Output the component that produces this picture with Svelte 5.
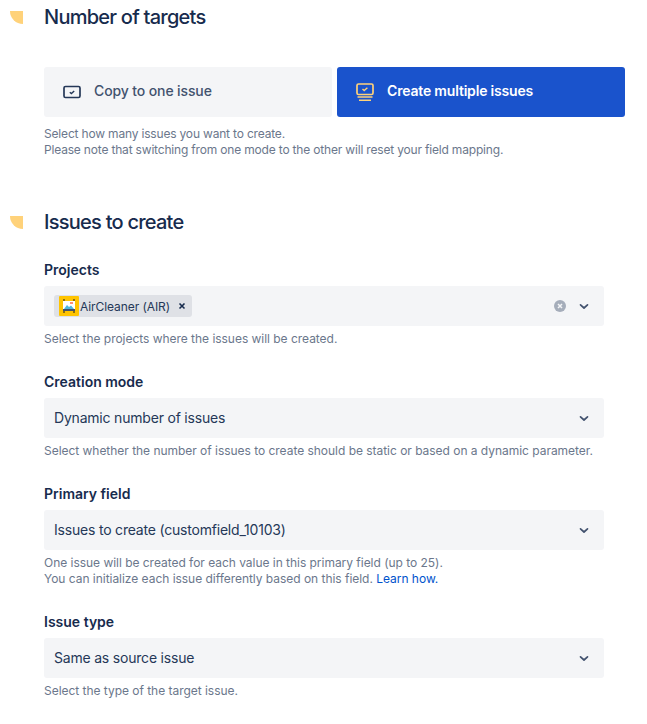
<script>
  const fields = [
    { label: 'Creation mode', value: 'Dynamic number of issues', help: ['Select whether the number of issues to create should be static or based on a dynamic parameter.'] },
    { label: 'Primary field', value: 'Issues to create (customfield_10103)', help: ['One issue will be created for each value in this primary field (up to 25).', 'You can initialize each issue differently based on this field.'], link: true },
    { label: 'Issue type', value: 'Same as source issue', help: ['Select the type of the target issue.'] }
  ];
</script>

{#snippet chevron()}
  <svg class="chev" width="24" height="24" viewBox="0 0 24 24"><path d="M8.500 10.800 12 14l3.500-3.200" fill="none" stroke="#42526e" stroke-width="1.700" stroke-linecap="round" stroke-linejoin="round"/></svg>
{/snippet}

<div class="page">
  <section class="first">
    <header class="head"><span class="mark"></span><h2>Number of targets</h2></header>
    <div class="body">
      <div class="cards">
        <div class="card">
          <svg width="18" height="14" viewBox="0 0 18 14"><rect x="1" y="1.500" width="16" height="11" rx="1.500" fill="none" stroke="#253858" stroke-width="1.700"/><path d="M6.800 7.200 8.400 8.600 11.200 6" fill="none" stroke="#253858" stroke-width="1.400"/></svg>
          <span>Copy to one issue</span>
        </div>
        <div class="card active">
          <svg width="18" height="19" viewBox="0 0 18 19"><rect x="1" y="1" width="16" height="10.500" rx="1.500" fill="none" stroke="#ffd27a" stroke-width="1.700"/><path d="M6.500 6 8.200 7.500 11.400 4.800" fill="none" stroke="#ffd27a" stroke-width="1.400"/><path d="M1.500 14h15M3 17.200h12" stroke="#ffd27a" stroke-width="1.600"/></svg>
          <span>Create multiple issues</span>
        </div>
      </div>
      <p class="help top">Select how many issues you want to create.<br />Please note that switching from one mode to the other will reset your field mapping.</p>
    </div>
  </section>

  <section class="second">
    <header class="head"><span class="mark"></span><h2>Issues to create</h2></header>
    <div class="body form">
      <div class="field">
        <div class="label">Projects</div>
        <div class="control multi">
          <span class="tag">
            <svg width="20" height="20" viewBox="0 0 20 20"><rect width="20" height="20" rx="1" fill="#ffc400"/><path d="M5 3v14M15 3v14" stroke="#5e4a1f" stroke-width="1.400"/><rect x="4" y="5" width="12" height="8" fill="#fff"/><path d="M5 13l3-4 2 2 2-1.500 3 3.500z" fill="#4fb6dc"/><rect x="11" y="6" width="3" height="2" fill="#ff8f73"/><rect x="4" y="13" width="12" height="2" fill="#42526e"/></svg>
            <span class="tag-text">AirCleaner (AIR)</span>
            <svg class="x" width="8" height="8" viewBox="0 0 8 8"><path d="M1.500 1.500l5 5M6.500 1.500l-5 5" stroke="#172b4d" stroke-width="1.600"/></svg>
          </span>
          <span class="icons">
            <svg width="12" height="12" viewBox="0 0 12 12"><circle cx="6" cy="6" r="6" fill="#a5adba"/><path d="M4 4l4 4M8 4l-4 4" stroke="#f4f5f7" stroke-width="1.500"/></svg>
            {@render chevron()}
          </span>
        </div>
        <p class="help">Select the projects where the issues will be created.</p>
      </div>

      {#each fields as f}
        <div class="field">
          <div class="label">{f.label}</div>
          <div class="control">
            <span class="value">{f.value}</span>
            {@render chevron()}
          </div>
          <p class="help">
            {#each f.help as line, i}
              {#if i > 0}<br />{/if}{line}
            {/each}
            {#if f.link}<a href="#learn">Learn how.</a>{/if}
          </p>
        </div>
      {/each}
    </div>
  </section>
</div>

<style>
  :global(body) {
    margin: 0;
    background: #fff;
    font-family: Inter, "Noto Sans", sans-serif;
    color: #172b4d;
  }
  .page {
    width: 647px;
    height: 724px;
    overflow: hidden;
    box-sizing: border-box;
    padding-left: 10px;
  }
  .first {
    padding-top: 5px;
  }
  .second {
    margin-top: 52px;
  }
  .head {
    display: flex;
    align-items: center;
    gap: 21px;
    height: 24px;
  }
  .mark {
    width: 13px;
    height: 13px;
    background: #ffd27a;
    border-bottom-left-radius: 13px;
  }
  h2 {
    margin: 0;
    font-size: 20px;
    line-height: 24px;
    font-weight: 500;
    letter-spacing: -0.75px;
    color: #172b4d;
  }
  .body {
    margin-left: 34px;
  }
  .cards {
    display: flex;
    gap: 5px;
    margin-top: 38px;
    width: 581px;
  }
  .card {
    flex: 1;
    height: 50px;
    box-sizing: border-box;
    display: flex;
    align-items: center;
    gap: 13px;
    padding-left: 19px;
    border-radius: 3px;
    background: #f4f5f7;
    color: #42526e;
    font-size: 14px;
    line-height: 16px;
    font-weight: 500;
    letter-spacing: -0.12px;
  }
  .card span {
    position: relative;
    top: -1px;
  }
  .card.active {
    background: #1a53cc;
    color: #fff;
    font-weight: 600;
    letter-spacing: -0.18px;
  }
  .help {
    margin: 5px 0 0;
    font-size: 12px;
    line-height: 16px;
    letter-spacing: -0.03px;
    color: #6b778c;
  }
  .help.top {
    margin-top: 9px;
    letter-spacing: -0.18px;
  }
  .help a {
    color: #0052cc;
    text-decoration: none;
  }
  .form {
    padding-top: 28px;
    width: 560px;
    display: flex;
    flex-direction: column;
    gap: 27px;
  }
  .label {
    font-size: 14px;
    line-height: 16px;
    font-weight: 600;
    color: #172b4d;
    margin-bottom: 8px;
  }
  .control {
    height: 40px;
    box-sizing: border-box;
    display: flex;
    align-items: center;
    justify-content: space-between;
    padding: 0 8px 0 10px;
    border-radius: 3px;
    background: #f4f5f7;
    font-size: 14px;
    letter-spacing: -0.2px;
    color: #253858;
  }
  .value {
    line-height: 16px;
    margin-top: -1px;
  }
  .chev {
    display: block;
  }
  .tag {
    display: flex;
    align-items: center;
    height: 22px;
    padding: 0 5px 0 6px;
    width: 138px;
    box-sizing: border-box;
    border-radius: 3px;
    background: #dfe1e6;
    font-size: 12px;
    letter-spacing: -0.08px;
    color: #172b4d;
  }
  .tag svg:first-child {
    margin-left: -1px;
    flex: none;
  }
  .tag-text {
    padding-left: 1px;
    white-space: nowrap;
    margin-right: auto;
    color: #253858;
  }
  .x {
    margin-right: 1px;
  }
  .icons {
    display: flex;
    align-items: center;
    gap: 6px;
  }
</style>
